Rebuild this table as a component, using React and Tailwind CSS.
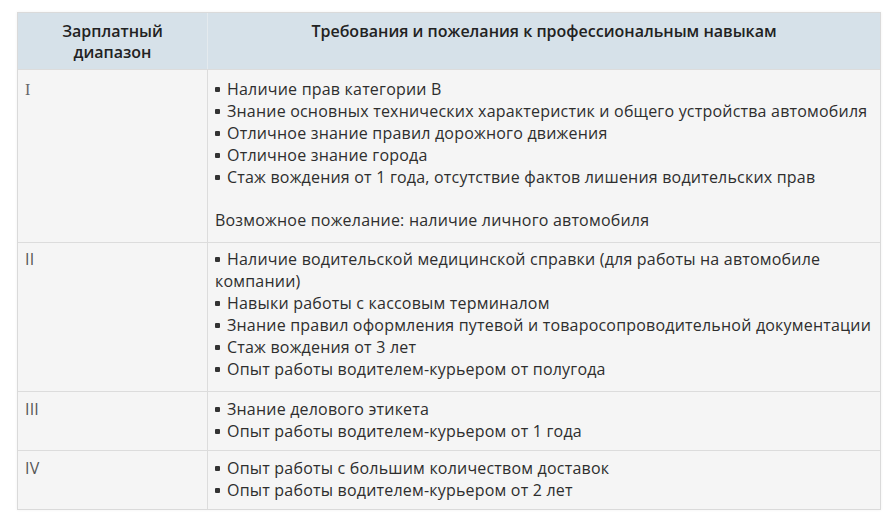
import React from "react";

const Bullet = () => (
  <span className="inline-block w-[5px] h-[5px] rounded-[1px] bg-[#333] align-middle mr-[7px] relative top-[-1px]"></span>
);

const Item = ({ children }) => (
  <div>
    <Bullet />
    {children}
  </div>
);

const rows = [
  {
    n: "I",
    serif: true,
    cls: "pt-[8px] pb-[11px]",
    items: [
      "Наличие прав категории В",
      "Знание основных технических характеристик и общего устройства автомобиля",
      "Отличное знание правил дорожного движения",
      "Отличное знание города",
      "Стаж вождения от 1 года, отсутствие фактов лишения водительских прав",
    ],
    extra: "Возможное пожелание: наличие личного автомобиля",
  },
  {
    n: "II",
    cls: "pt-[5px] pb-[11px]",
    items: [
      <>Наличие водительской медицинской справки (для работы на автомобиле<br />компании)</>,
      "Навыки работы с кассовым терминалом",
      "Знание правил оформления путевой и товаросопроводительной документации",
      "Стаж вождения от 3 лет",
      "Опыт работы водителем-курьером от полугода",
    ],
  },
  {
    n: "III",
    cls: "pt-[6px] pb-[8px]",
    items: ["Знание делового этикета", "Опыт работы водителем-курьером от 1 года"],
  },
  {
    n: "IV",
    cls: "pt-[6px] pb-[8px]",
    items: ["Опыт работы с большим количеством доставок", "Опыт работы водителем-курьером от 2 лет"],
  },
];

export default function App() {
  return (
    <div className="w-[894px] h-[524px] bg-white pt-[12px] pl-[17px] font-['Open_Sans',_'Liberation_Sans',_sans-serif]">
      <div className="w-[864px] border border-[#dadada] bg-[#f5f5f5] shadow-[0_0_3px_rgba(0,0,0,0.06)]">
        <div className="grid grid-cols-[190px_1fr] bg-[#d6e1e9] text-[16px] leading-[21px] font-semibold text-[#222]">
          <div className="border-r border-[#e4eaee] text-center pt-[8px] pb-[7px] h-[56px]">
            Зарплатный
            <br />
            диапазон
          </div>
          <div className="text-center pt-[8px]">Требования и пожелания к профессиональным навыкам</div>
        </div>
        {rows.map((r, i) => (
          <div key={i} className="grid grid-cols-[190px_1fr] border-t border-[#dcdcdc] text-[16px] tracking-[0.2px] leading-[22px]">
            <div className={`border-r border-[#dcdcdc] pl-[7px] text-[#555] ${r.cls}`}>
              <span className={r.serif ? "font-['Liberation_Serif',_serif] text-[#666]" : ""}>{r.n}</span>
            </div>
            <div className={`pl-[7px] pr-[2px] text-[#2e2e2e] whitespace-nowrap overflow-hidden ${r.cls}`}>
              {r.items.map((t, j) => (
                <Item key={j}>{t}</Item>
              ))}
              {r.extra && <div className="mt-[21px]">{r.extra}</div>}
            </div>
          </div>
        ))}
      </div>
    </div>
  );
}
